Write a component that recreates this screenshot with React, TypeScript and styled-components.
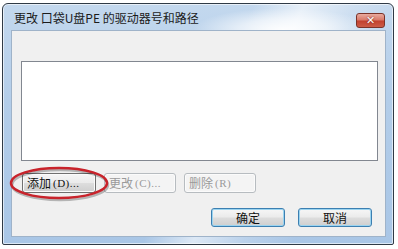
import React from "react";
import styled, { createGlobalStyle } from "styled-components";

const Global = createGlobalStyle`
  html, body { margin: 0; padding: 0; background: #ffffff; }
  body { font-family: "Noto Sans CJK SC", "Liberation Sans", sans-serif; }
`;

const Page = styled.div`
  width: 398px;
  height: 249px;
  padding: 3px 0 0 2px;
  box-sizing: border-box;
  position: relative;
`;

const Window = styled.div`
  width: 392px;
  height: 242px;
  box-sizing: border-box;
  border: 1px solid #2f3a46;
  border-radius: 6px 6px 2px 2px;
  background:
    radial-gradient(ellipse 90px 22px at 280px 26px, rgba(255,255,255,0.95) 0%, rgba(255,255,255,0.6) 50%, rgba(255,255,255,0) 100%),
    linear-gradient(115deg, rgba(255,255,255,0) 50%, rgba(255,255,255,0.6) 60%, rgba(255,255,255,0.2) 70%, rgba(255,255,255,0) 80%),
    linear-gradient(180deg, #c3d8ee 0%, #b3cde9 40%, #a9c6e6 100%);
  box-shadow: inset 0 0 0 1px rgba(255,255,255,0.6);
  display: flex;
  flex-direction: column;
`;

const TitleBar = styled.div`
  height: 26px;
  display: flex;
  align-items: center;
  justify-content: space-between;
  padding: 2px 8px 0 11px;
  box-sizing: border-box;
`;

const Title = styled.span`
  font-size: 12px;
  color: #1b1b1b;
  line-height: 14px;
`;

const CloseBtn = styled.div`
  width: 29px;
  height: 15px;
  margin-top: 4px;
  box-sizing: border-box;
  border: 1px solid #7b3329;
  border-radius: 3px;
  background: linear-gradient(180deg, #e9ab9f 0%, #d97b6b 45%, #c2412f 55%, #cc5c47 100%);
  display: flex;
  align-items: center;
  justify-content: center;
  color: #ffffff;
  font-family: "DejaVu Sans", sans-serif;
  font-weight: bold;
  font-size: 11px;
  line-height: 11px;
  text-shadow: 0 0 2px #6b1a10;
`;

const Content = styled.div`
  flex: 1;
  margin: 0 7px 7px 8px;
  background: #f0f0f0;
  border: 1px solid #9fb3c9;
  padding: 30px 7px 0 9px;
  display: flex;
  flex-direction: column;
`;

const ListBox = styled.div`
  height: 98px;
  background: #ffffff;
  border: 1px solid #828790;
`;

const ActionRow = styled.div`
  display: flex;
  gap: 8px;
  margin-top: 12px;
  padding-left: 1px;
`;

const Button = styled.div<{ $disabled?: boolean; $w: number; $primary?: boolean }>`
  width: ${(p) => p.$w}px;
  height: ${(p) => (p.$primary ? 19 : 20)}px;
  box-sizing: border-box;
  border: 1px solid ${(p) => (p.$disabled ? "#b7bcc0" : p.$primary ? "#3c7fb1" : "#707070")};
  border-radius: 3px;
  background: ${(p) =>
    p.$disabled
      ? "#f4f4f4"
      : "linear-gradient(180deg, #f6f6f6 0%, #ebebeb 48%, #dddddd 52%, #cfcfcf 100%)"};
  box-shadow: ${(p) => (p.$primary ? "inset 0 0 0 1px #9bd4f0" : "inset 0 0 0 1px #fbfbfb")};
  color: ${(p) => (p.$disabled ? "#9a9a9a" : "#111111")};
  font-size: 12px;
  line-height: 16px;
  display: flex;
  align-items: center;
  justify-content: ${(p) => (p.$primary ? "center" : "flex-start")};
  padding-left: ${(p) => (p.$primary ? 0 : 4)}px;
`;

const Mnemonic = styled.span`
  font-family: "Liberation Serif", serif;
  font-size: 11px;
  margin-left: 2px;
  letter-spacing: 0.5px;
`;

const BottomRow = styled.div`
  display: flex;
  justify-content: flex-end;
  gap: 13px;
  margin-top: 15px;
  padding-right: 6px;
`;

const Ellipse = styled.svg`
  position: absolute;
  left: 10px;
  top: 166px;
  width: 100px;
  height: 36px;
  overflow: visible;
`;

export default function App() {
  return (
    <>
      <Global />
      <Page>
        <Window>
          <TitleBar>
            <Title>更改 口袋U盘PE 的驱动器号和路径</Title>
            <CloseBtn>✕</CloseBtn>
          </TitleBar>
          <Content>
            <ListBox />
            <ActionRow>
              <Button $w={74}>
                添加<Mnemonic>(D)...</Mnemonic>
              </Button>
              <Button $w={72} $disabled>
                更改<Mnemonic>(C)...</Mnemonic>
              </Button>
              <Button $w={72} $disabled>
                删除<Mnemonic>(R)</Mnemonic>
              </Button>
            </ActionRow>
            <BottomRow>
              <Button $w={74} $primary>确定</Button>
              <Button $w={74} $primary>取消</Button>
            </BottomRow>
          </Content>
        </Window>
        <Ellipse viewBox="0 0 100 36">
          <ellipse cx="50" cy="19" rx="48" ry="15" fill="none" stroke="rgba(0,0,0,0.25)" strokeWidth="2.5" />
          <ellipse cx="49" cy="17" rx="48" ry="15" fill="none" stroke="#c8232b" strokeWidth="2.5" />
        </Ellipse>
      </Page>
    </>
  );
}
